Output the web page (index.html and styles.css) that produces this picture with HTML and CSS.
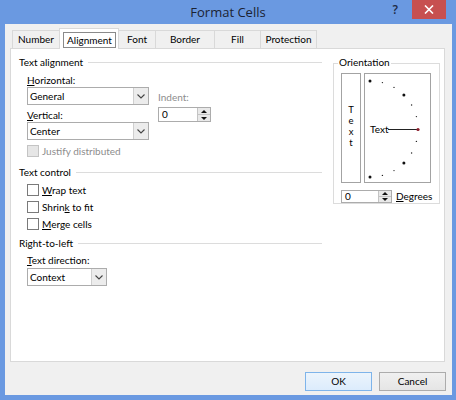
FILE: index.html
```html
<!DOCTYPE html>
<html>
<head>
<meta charset="utf-8">
<title>Format Cells</title>
<link rel="stylesheet" href="styles.css">
</head>
<body>
<div class="window">
  <div class="titlebar">
    <div></div>
    <div class="title">Format Cells</div>
    <div class="tb-right">
      <span class="help">?</span>
      <span class="close"><svg width="10" height="9" viewBox="0 0 10 9"><path d="M1 0.5 L9 8.5 M9 0.5 L1 8.5" stroke="#fff" stroke-width="1.6" fill="none"/></svg></span>
    </div>
  </div>
  <div class="client">
    <div class="tabs">
      <div class="tab w-number">Number</div>
      <div class="tab sel w-align"><span class="focus">Alignment</span></div>
      <div class="tab w-font">Font</div>
      <div class="tab w-border">Border</div>
      <div class="tab w-fill">Fill</div>
      <div class="tab w-prot">Protection</div>
    </div>
    <div class="panel">
      <div class="left">
        <div class="ghdr"><span>Text alignment</span><i class="gline"></i></div>
        <div class="sub align-row">
          <div class="combos">
            <div class="lbl"><u>H</u>orizontal:</div>
            <div class="combo w-wide"><span class="cval">General</span><span class="carrow"><svg width="8" height="5" viewBox="0 0 8 5"><path d="M0.5 0.5 L4 4 L7.5 0.5" stroke="#444" stroke-width="1.1" fill="none"/></svg></span></div>
            <div class="lbl lbl-gap"><u>V</u>ertical:</div>
            <div class="combo w-wide"><span class="cval">Center</span><span class="carrow"><svg width="8" height="5" viewBox="0 0 8 5"><path d="M0.5 0.5 L4 4 L7.5 0.5" stroke="#444" stroke-width="1.1" fill="none"/></svg></span></div>
          </div>
          <div class="indent">
            <div class="lbl dis">Indent:</div>
            <div class="spin w-indent"><span class="sval">0</span><span class="sbtns"><span class="sb"><i class="up"></i></span><span class="sb"><i class="dn"></i></span></span></div>
          </div>
        </div>
        <div class="sub chkrow justify dis"><span class="cb cb-dis"></span><span>Justify distributed</span></div>

        <div class="ghdr gh-control"><span>Text control</span><i class="gline"></i></div>
        <div class="sub checks">
          <div class="chkrow r17"><span class="cb"></span><span><u>W</u>rap text</span></div>
          <div class="chkrow r17"><span class="cb"></span><span>Shrin<u>k</u> to fit</span></div>
          <div class="chkrow r17"><span class="cb"></span><span><u>M</u>erge cells</span></div>
        </div>

        <div class="ghdr gh-rtl"><span>Right-to-left</span><i class="gline"></i></div>
        <div class="sub">
          <div class="lbl lbl-gap"><u>T</u>ext direction:</div>
          <div class="combo w-ctx ctx"><span class="cval">Context</span><span class="carrow"><svg width="8" height="5" viewBox="0 0 8 5"><path d="M0.5 0.5 L4 4 L7.5 0.5" stroke="#444" stroke-width="1.1" fill="none"/></svg></span></div>
        </div>
      </div>
      <div class="right">
        <div class="gbox">
          <div class="glegend">Orientation</div>
          <div class="orow">
            <div class="vtext"><div class="vletters">T<br>e<br>x<br>t</div></div>
            <div class="dial">
              <svg width="65" height="108" viewBox="0 0 65 108">
                <circle cx="5" cy="7" r="1.5" fill="#111"/>
                <circle cx="17.4" cy="8.6" r="0.7" fill="#222"/>
                <circle cx="29" cy="13.4" r="0.7" fill="#222"/>
                <circle cx="38.9" cy="21.1" r="1.5" fill="#111"/>
                <circle cx="46.6" cy="31" r="0.7" fill="#222"/>
                <circle cx="51.4" cy="42.6" r="0.7" fill="#222"/>
                <circle cx="51.4" cy="67.4" r="0.7" fill="#222"/>
                <circle cx="46.6" cy="79" r="0.7" fill="#222"/>
                <circle cx="38.9" cy="88.9" r="1.5" fill="#111"/>
                <circle cx="29" cy="96.6" r="0.7" fill="#222"/>
                <circle cx="17.4" cy="101.4" r="0.7" fill="#222"/>
                <circle cx="5" cy="103" r="1.5" fill="#111"/>
                <line x1="23" y1="55.5" x2="53" y2="55.5" stroke="#222" stroke-width="1"/>
                <circle cx="53" cy="55.5" r="1.6" fill="#8a1c2a"/>
                <text x="5" y="59" class="dtext">Text</text>
              </svg>
            </div>
          </div>
          <div class="drow">
            <div class="spin w-deg"><span class="sval">0</span><span class="sbtns"><span class="sb"><i class="up"></i></span><span class="sb"><i class="dn"></i></span></span></div>
            <span class="deg"><u>D</u>egrees</span>
          </div>
        </div>
      </div>
    </div>
    <div class="buttons">
      <div class="btn ok">OK</div>
      <div class="btn">Cancel</div>
    </div>
  </div>
</div>
</body>
</html>
```

FILE: styles.css
```css
* { box-sizing: border-box; }
html, body { margin: 0; padding: 0; }
body {
  width: 456px;
  height: 400px;
  overflow: hidden;
  background: #6a99e1;
  font-family: Lato, "Liberation Sans", sans-serif;
  font-size: 10px;
  color: #000;
}
u { text-decoration: underline; text-underline-offset: 1px; }
.window { width: 456px; height: 400px; display: flex; flex-direction: column; }

/* title bar */
.titlebar {
  height: 24px;
  flex: none;
  display: grid;
  grid-template-columns: 1fr auto 1fr;
}
.title {
  font-family: "Open Sans", sans-serif;
  font-size: 13px;
  line-height: 24px;
  color: #1b2333;
}
.tb-right {
  display: flex;
  justify-content: flex-end;
  align-items: flex-start;
  padding-right: 10px;
}
.help {
  font-family: "Open Sans", sans-serif;
  font-size: 12px;
  font-weight: 600;
  color: #1d2a44;
  line-height: 20px;
  margin-right: 14px;
}
.close {
  width: 34px;
  height: 19px;
  background: #c75050;
  display: flex;
  align-items: center;
  justify-content: center;
}

/* client */
.client {
  flex: 1;
  margin: 0 4px 5px 5px;
  background: #f0f0f0;
  padding-top: 4px;
  display: flex;
  flex-direction: column;
}

/* tabs */
.tabs {
  display: flex;
  align-items: flex-end;
  height: 20px;
  margin-left: 7px;
}
.tab {
  height: 18px;
  border: 1px solid #d9d9d9;
  border-bottom: none;
  background: #f0f0f0;
  margin-right: -1px;
  display: flex;
  align-items: center;
  justify-content: center;
  line-height: 14px;
  padding-bottom: 1px;
}
.tab.sel {
  height: 21px;
  margin-bottom: -1px;
  background: #fff;
  position: relative;
  z-index: 2;
  align-items: flex-start;
  padding: 3px 2px 0 3px;
}
.focus {
  display: block;
  width: 100%;
  height: 16px;
  border: 1px solid #8a8a8a;
  line-height: 14px;
  text-align: center;
}
.w-number { width: 48px; }
.w-align { width: 60px; }
.w-font { width: 38px; }
.w-border { width: 60px; }
.w-fill { width: 47px; }
.w-prot { width: 57px; }

/* panel */
.panel {
  position: relative;
  z-index: 1;
  margin-left: 5px;
  width: 435px;
  height: 314px;
  background: #fff;
  border: 1px solid #d9d9d9;
  display: flex;
  padding: 6px 4px 0 8px;
}
.left { width: 314px; }
.right { width: 107px; }

.ghdr {
  width: 303px;
  height: 14px;
  display: flex;
  align-items: center;
  line-height: 14px;
}
.gline {
  flex: 1;
  height: 1px;
  background: #dcdcdc;
  margin-left: 5px;
}
.gh-control { margin-top: 7px; }
.gh-rtl { margin-top: 4px; }

.sub { padding-left: 8px; }
.lbl { height: 14px; line-height: 14px; }
.lbl-gap { margin-top: 3px; }
.dis { color: #8d8d8d; }

.align-row { display: flex; margin-top: 4px; }
.combos { width: 122px; }
.indent { margin-left: 9px; padding-top: 17px; }
.indent .spin { margin-top: 3px; }

.combo {
  height: 18px;
  border: 1px solid #acacac;
  background: #fff;
  display: flex;
}
.w-wide { width: 122px; }
.w-ctx { width: 80px; }
.ctx { margin-top: 1px; }
.cval { flex: 1; padding-left: 2px; line-height: 16px; }
.carrow {
  width: 15px;
  background: #ececec;
  border-left: 1px solid #cfcfcf;
  display: flex;
  align-items: center;
  justify-content: center;
}

.spin {
  height: 15px;
  border: 1px solid #acacac;
  background: #fff;
  display: flex;
}
.w-indent { width: 53px; }
.w-deg { width: 51px; height: 13px; }
.sval { flex: 1; padding-left: 3px; line-height: 13px; }
.w-deg .sval { line-height: 11px; }
.sbtns {
  width: 13px;
  display: flex;
  flex-direction: column;
  background: #e9e9e9;
  border-left: 1px solid #c4c4c4;
}
.sb {
  flex: 1;
  display: flex;
  align-items: center;
  justify-content: center;
}
.sb + .sb { border-top: 1px solid #c4c4c4; }
.up, .dn { width: 0; height: 0; border-left: 3px solid transparent; border-right: 3px solid transparent; }
.up { border-bottom: 3px solid #111; }
.dn { border-top: 3px solid #111; }

.chkrow {
  height: 14px;
  line-height: 14px;
  display: flex;
  align-items: center;
}
.r17 { height: 17px; }
.justify { margin-top: 4px; }
.checks { margin-top: 2px; }
.cb {
  width: 12px;
  height: 12px;
  border: 1px solid #7a7a7a;
  background: #fff;
  margin-right: 3px;
  flex: none;
}
.cb-dis { border-color: #c4c4c4; background: #e6e6e6; }

/* orientation */
.gbox {
  margin-top: 8px;
  width: 107px;
  height: 141px;
  border: 1px solid #dcdcdc;
  padding-left: 7px;
}
.glegend {
  display: block;
  width: max-content;
  height: 14px;
  line-height: 14px;
  margin-top: -9px;
  margin-left: -3px;
  padding: 0 1px;
  background: #fff;
}
.orow { display: flex; margin-top: 4px; }
.vtext {
  width: 20px;
  height: 110px;
  border: 1px solid #a3a3a3;
  background: #fff;
  display: flex;
  align-items: center;
  justify-content: center;
  padding-bottom: 5px;
}
.vletters { font-size: 9.5px; line-height: 11px; text-align: center; color: #000; }
.dial {
  width: 67px;
  height: 110px;
  margin-left: 3px;
  border: 1px solid #a3a3a3;
  background: #fff;
}
.dial svg { display: block; }
.dtext { font-family: Lato, "Liberation Sans", sans-serif; font-size: 10px; fill: #000; }
.drow { display: flex; align-items: center; margin-top: 7px; }
.deg { margin-left: 4px; line-height: 13px; }

/* buttons */
.buttons {
  display: flex;
  justify-content: flex-end;
  gap: 7px;
  margin-top: 10px;
  padding-right: 6px;
}
.btn {
  width: 67px;
  height: 19px;
  border: 1px solid #acacac;
  background: linear-gradient(#f0f0f0, #e5e5e5);
  text-align: center;
  line-height: 17px;
}
.btn.ok {
  border-color: #7eb4ea;
  background: linear-gradient(#ecf4fc, #dcecfc);
}
```
